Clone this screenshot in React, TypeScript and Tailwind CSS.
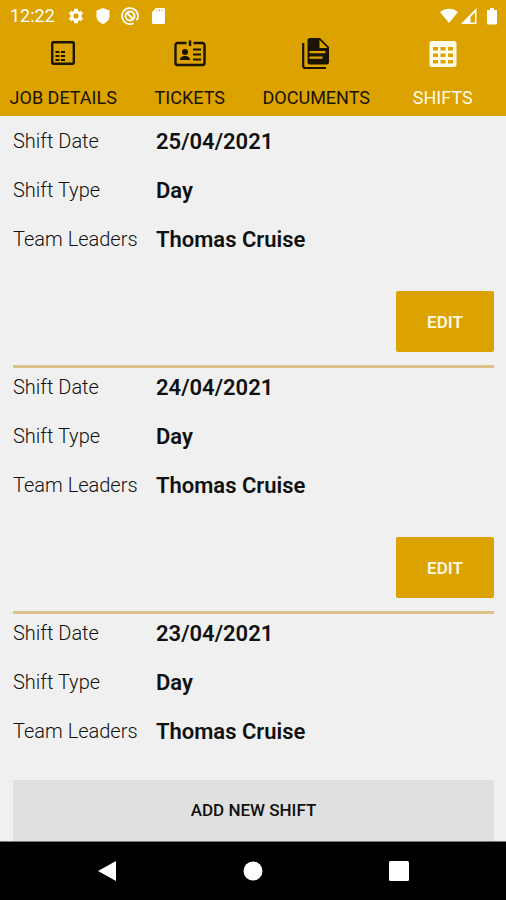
import type { ReactNode } from "react";
import { MdSettings } from "react-icons/md";

interface Shift {
  date: string;
  type: string;
  leaders: string;
  editable: boolean;
}

const SHIFTS: Shift[] = [
  { date: "25/04/2021", type: "Day", leaders: "Thomas Cruise", editable: true },
  { date: "24/04/2021", type: "Day", leaders: "Thomas Cruise", editable: true },
  { date: "23/04/2021", type: "Day", leaders: "Thomas Cruise", editable: false },
];

function JobIcon() {
  return (
    <svg viewBox="0 0 32 32" className="size-8" aria-hidden="true">
      <rect x="5.2" y="4.2" width="21.600" height="21.600" rx="1.500" fill="none" stroke="currentColor" strokeWidth="2.400" />
      <path
        fill="currentColor"
        d="M8.500 13h4v2h-4zm5.500 0h4v2h-4zM8.500 17h4v2h-4zm5.500 0h4v2h-4zM8.500 21h4v2h-4zm5.500 0h4v2h-4z"
      />
    </svg>
  );
}

function TicketIcon() {
  return (
    <svg viewBox="0 0 32 32" className="size-8" aria-hidden="true">
      <path
        d="M12.500 5H3.500a2 2 0 0 0-2 2v18a2 2 0 0 0 2 2h25a2 2 0 0 0 2-2V7a2 2 0 0 0-2-2h-9"
        fill="none"
        stroke="currentColor"
        strokeWidth="2.400"
      />
      <path d="M16 2.500v5.500" stroke="currentColor" strokeWidth="2.500" />
      <circle cx="11" cy="14" r="3" fill="currentColor" />
      <path d="M6 22c0-3 2.500-4 5-4s5 1 5 4z" fill="currentColor" />
      <path d="M19 11.500h8M19 16.500h8M19 21.500h8" stroke="currentColor" strokeWidth="2.200" />
    </svg>
  );
}

function DocumentIcon() {
  return (
    <svg viewBox="0 0 32 32" className="size-8" aria-hidden="true">
      <path d="M3.200 5v23a2 2 0 0 0 2 2H26" fill="none" stroke="currentColor" strokeWidth="2.200" />
      <path
        fill="currentColor"
        fillRule="evenodd"
        d="M10 0H20l9 9v15a2.500 2.500 0 0 1-2.500 2.500H10A2.500 2.500 0 0 1 7.500 24v-21.500A2.500 2.500 0 0 1 10 0zM19.500 2v8h8zM9.500 13v2.200h16v-2.200zM9.500 18.500v2.200h13V18.500z"
      />
    </svg>
  );
}

function ShiftIcon() {
  return (
    <svg viewBox="0 0 32 32" className="size-8" aria-hidden="true">
      <path
        fill="currentColor"
        fillRule="evenodd"
        d="M5 3h22a2.500 2.500 0 0 1 2.500 2.500v21A2.500 2.500 0 0 1 27 29H5a2.500 2.500 0 0 1-2.500-2.500v-21A2.500 2.500 0 0 1 5 3zM6 9v3.500h5V9zM13.500 9v3.500h5V9zM21 9v3.500h5V9zM6 15.500V19h5v-3.500zM13.500 15.500V19h5v-3.500zM21 15.500V19h5v-3.500zM6 22v3.500h5V22zM13.500 22v3.500h5V22zM21 22v3.500h5V22z"
      />
    </svg>
  );
}

const TABS: { label: string; icon: ReactNode; active?: boolean }[] = [
  { label: "JOB DETAILS", icon: <JobIcon /> },
  { label: "TICKETS", icon: <TicketIcon /> },
  { label: "DOCUMENTS", icon: <DocumentIcon /> },
  { label: "SHIFTS", icon: <ShiftIcon />, active: true },
];

function StatusBar() {
  return (
    <div className="flex h-8 items-center justify-between pr-1.5 pl-2.5 text-white">
      <div className="flex items-center gap-3">
        <span className="text-[18px] leading-5">12:22</span>
        <div className="flex items-center gap-2.5" aria-hidden="true">
          <MdSettings className="size-[18px]" />
          <svg viewBox="0 0 16 18" className="h-[18px] w-4">
            <path fill="currentColor" d="M8 1l6.500 2.500V9c0 4-3 6.500-6.500 8-3.500-1.500-6.500-4-6.500-8V3.500z" />
          </svg>
          <svg viewBox="0 0 18 18" className="size-[18px]" fill="none" stroke="currentColor">
            <path d="M12.500 16.300A8 8 0 1 1 17 9c0 2-.8 3.500-1.500 4.300" strokeWidth="1.700" />
            <circle cx="9" cy="9" r="4.500" strokeWidth="1.900" />
            <path d="M6 6l6.500 6.500" strokeWidth="1.900" />
          </svg>
          <svg viewBox="0 0 18 18" className="size-[18px]">
            <path
              fill="currentColor"
              fillRule="evenodd"
              d="M7 1h7.500A1.500 1.500 0 0 1 16 2.500v13a1.500 1.500 0 0 1-1.500 1.500h-10A1.500 1.500 0 0 1 3 15.500V5zM7.500 2.500v1.500h1V2.500zM10 2.500v1.500h1V2.500zM12.500 2.500v1.500h1V2.500z"
            />
          </svg>
        </div>
      </div>
      <div className="flex items-center gap-[3px]" aria-hidden="true">
        <svg viewBox="0 0 18 16" className="h-4 w-[18px]">
          <path fill="currentColor" d="M0 4C5-.5 13-.5 18 4L9 15z" />
        </svg>
        <svg viewBox="0 0 16 16" className="size-4">
          <path fill="currentColor" fillRule="evenodd" d="M15.500 0v16H0zM14 4.500l-4.500 4.500v5.500H14z" />
        </svg>
        <svg viewBox="0 0 16 18" className="ml-1 h-[18px] w-4">
          <path fill="currentColor" d="M6 1h4v2h3v13.500a1 1 0 0 1-1 1H4a1 1 0 0 1-1-1V3h3z" />
        </svg>
      </div>
    </div>
  );
}

function ShiftCard({ date, type, leaders, editable }: Shift) {
  const rows = [
    ["Shift Date", date],
    ["Shift Type", type],
    ["Team Leaders", leaders],
  ];

  return (
    <li className="border-b-3 border-[#dcc08a] pt-1.5 pb-[13px] last:border-b-0 last:pb-0">
      <dl className="space-y-[21px]">
        {rows.map(([label, value]) => (
          <div key={label} className="grid grid-cols-[143px_1fr]">
            <dt className="text-[20px] leading-[26px] font-light text-[#111111]">{label}</dt>
            <dd className="text-[22px] leading-7 font-semibold text-[#111111]">{value}</dd>
          </div>
        ))}
      </dl>
      {editable && (
        <div className="mt-[37px] flex justify-end">
          <button
            type="button"
            className="h-[61px] w-[98px] rounded-xs bg-[#dba200] pt-0.5 text-[17px] font-semibold text-[#fff8e0]"
          >
            EDIT
          </button>
        </div>
      )}
    </li>
  );
}

export default function App() {
  return (
    <div className="flex h-screen flex-col bg-[#f0f0f0] font-[Roboto,sans-serif]">
      <header className="bg-[#dba200]">
        <StatusBar />
        <nav className="grid grid-cols-4" aria-label="Job sections">
          {TABS.map((tab) => (
            <a
              key={tab.label}
              href="#"
              aria-current={tab.active ? "page" : undefined}
              className={`flex h-21 flex-col items-center justify-between pt-1.5 pb-1.5 text-[18px] leading-6 whitespace-nowrap ${
                tab.active ? "text-[#fffbea]" : "text-[#1a1400]"
              }`}
            >
              {tab.icon}
              {tab.label}
            </a>
          ))}
        </nav>
      </header>

      <main className="flex min-h-0 flex-1 flex-col pr-3 pl-[13px]">
        <ul className="min-h-0 flex-1 overflow-y-auto pt-1.5 [scrollbar-width:none]">
          {SHIFTS.map((shift) => (
            <ShiftCard key={shift.date} {...shift} />
          ))}
        </ul>
        <button
          type="button"
          className="mt-3 h-[61px] w-full shrink-0 bg-[#e0e0e0] text-[17px] font-medium text-[#111111]"
        >
          ADD NEW SHIFT
        </button>
      </main>

      <nav
        className="flex h-[59px] shrink-0 items-center justify-center gap-[122px] border-t border-[#777777] bg-black text-white"
        aria-label="System"
      >
        <button type="button" aria-label="Back">
          <svg viewBox="0 0 24 24" className="size-6">
            <path fill="currentColor" d="M21 2v20L3 12z" />
          </svg>
        </button>
        <button type="button" aria-label="Home">
          <svg viewBox="0 0 24 24" className="size-6">
            <circle cx="12" cy="12" r="9.500" fill="currentColor" />
          </svg>
        </button>
        <button type="button" aria-label="Recent apps">
          <svg viewBox="0 0 24 24" className="size-6">
            <rect x="2" y="2" width="20" height="20" rx="1.500" fill="currentColor" />
          </svg>
        </button>
      </nav>
    </div>
  );
}
